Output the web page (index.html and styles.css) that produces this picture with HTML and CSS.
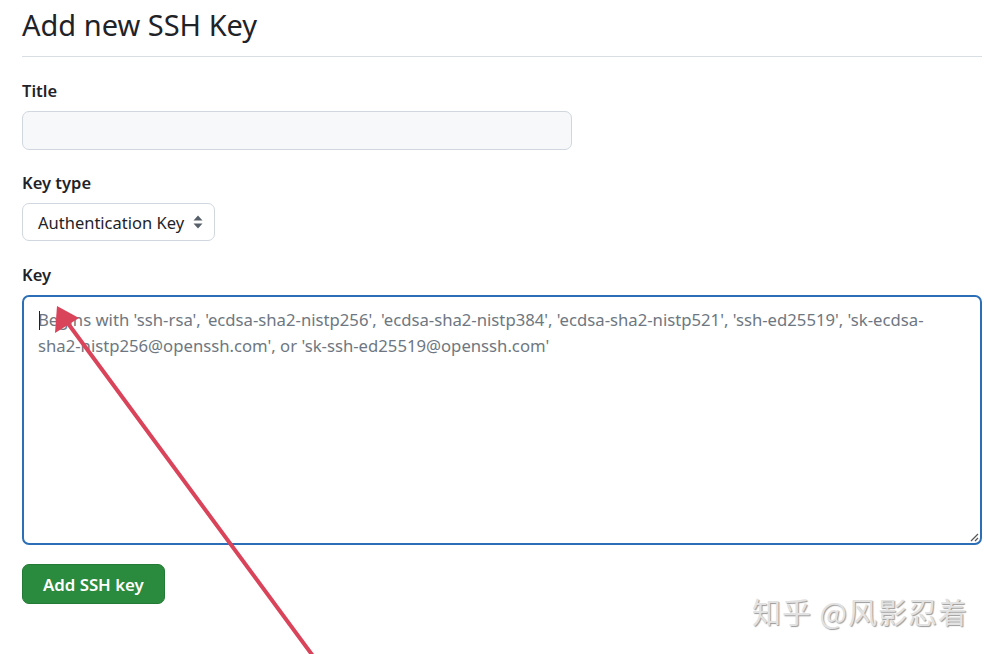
FILE: index.html
```html
<!DOCTYPE html>
<html lang="en">
<head>
<meta charset="utf-8">
<title>Add new SSH Key</title>
<link rel="stylesheet" href="styles.css">
</head>
<body>
<main class="page">
  <h1 class="heading">Add new SSH Key</h1>
  <form class="form">
    <div class="field field-title">
      <label class="label" for="title">Title</label>
      <input class="input" id="title" type="text">
    </div>
    <div class="field field-type">
      <label class="label" for="type">Key type</label>
      <div class="select">
        <span class="select-text">Authentication Key</span>
        <svg class="select-icon" width="10" height="16" viewBox="0 0 10 16"><path d="M5 1.5 L9.5 6.5 H0.5 Z M5 14.5 L9.5 9.5 H0.5 Z" fill="#57606a"/></svg>
      </div>
    </div>
    <div class="field field-key">
      <label class="label" for="key">Key</label>
      <div class="textarea">
        <span class="caret"></span>
        <p class="placeholder">Begins with 'ssh-rsa', 'ecdsa-sha2-nistp256', 'ecdsa-sha2-nistp384', 'ecdsa-sha2-nistp521', 'ssh-ed25519', 'sk-ecdsa-<br>sha2-nistp256@openssh.com', or 'sk-ssh-ed25519@openssh.com'</p>
        <svg class="grip" width="10" height="10" viewBox="0 0 10 10"><path d="M9 2 L2 9 M9 6 L6 9" stroke="#555" stroke-width="1.2" fill="none"/></svg>
      </div>
    </div>
    <div class="actions">
      <button class="btn" type="button">Add SSH key</button>
    </div>
  </form>
</main>
<svg class="arrow" width="995" height="654" viewBox="0 0 995 654">
  <line x1="313" y1="656" x2="64" y2="318" stroke="#d9445b" stroke-width="4" stroke-linecap="round"/>
  <path d="M57 306 L55 333 L79 318 Z" fill="#d9445b"/>
</svg>
<div class="watermark">知乎 @风影忍着</div>
</body>
</html>
```
FILE: styles.css
```css
html, body {
  margin: 0;
  padding: 0;
  background: #ffffff;
}
body {
  font-family: "Noto Sans", "Open Sans", Arial, sans-serif;
  color: #1f2328;
  width: 995px;
  height: 654px;
  overflow: hidden;
  position: relative;
}
.page {
  padding: 0 13px 0 22px;
}
.heading {
  margin: 0;
  padding: 4px 0 10px;
  font-size: 29px;
  font-weight: 400;
  line-height: 42px;
  border-bottom: 1px solid #d8dee4;
}
.form {
  display: flex;
  flex-direction: column;
}
.field {
  display: flex;
  flex-direction: column;
  align-items: flex-start;
}
.field-title {
  margin-top: 21px;
}
.field-type {
  margin-top: 20px;
}
.field-key {
  margin-top: 21px;
}
.label {
  font-size: 16.5px;
  font-weight: 600;
  line-height: 26px;
  margin-bottom: 7px;
}
.input {
  box-sizing: border-box;
  width: 550px;
  height: 39px;
  background: #f6f8fa;
  border: 1px solid #d0d7de;
  border-radius: 7px;
  margin: 0;
}
.select {
  box-sizing: border-box;
  height: 38px;
  width: 193px;
  border: 1px solid #d0d7de;
  border-radius: 7px;
  display: flex;
  align-items: center;
  justify-content: space-between;
  padding: 0 11px 0 15px;
  font-size: 16.5px;
  color: #1f2328;
}
.select-icon {
  display: block;
}
.textarea {
  box-sizing: border-box;
  position: relative;
  width: 960px;
  height: 250px;
  border: 2px solid #2d6fb7;
  border-radius: 7px;
  padding: 10px 14px;
}
.placeholder {
  margin: 0;
  font-size: 16.7px;
  line-height: 26px;
  color: #6e7781;
}
.caret {
  position: absolute;
  left: 15px;
  top: 14px;
  width: 1px;
  height: 19px;
  background: #1f2328;
}
.grip {
  position: absolute;
  right: 1px;
  bottom: 1px;
}
.actions {
  margin-top: 19px;
}
.btn {
  height: 40px;
  padding: 0 20px;
  background: #2a8a3d;
  color: #ffffff;
  border: 1px solid #237a34;
  border-radius: 7px;
  font-family: inherit;
  font-size: 16.8px;
  font-weight: 600;
}
.arrow {
  position: absolute;
  left: 0;
  top: 0;
  pointer-events: none;
}
.watermark {
  position: absolute;
  left: 752px;
  top: 593px;
  font-family: "Noto Sans CJK SC", sans-serif;
  font-size: 29px;
  line-height: 36px;
  color: #e2e2e2;
  text-shadow: 1px 1px 1px #9a9a9a;
  letter-spacing: 1px;
}
```
